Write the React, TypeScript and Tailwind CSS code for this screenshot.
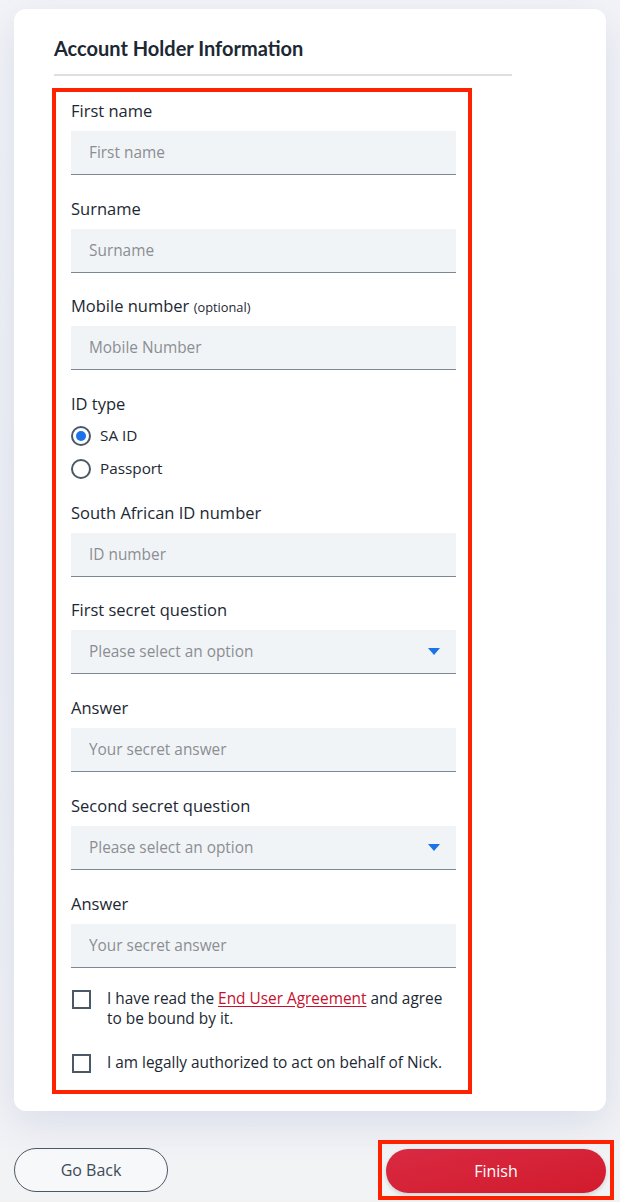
import React, { useState } from 'react'

const body = { fontFamily: '"Open Sans", "Liberation Sans", sans-serif' }

const TextField: React.FC<{ label: React.ReactNode; placeholder: string }> = ({ label, placeholder }) => (
  <div className="flex flex-col">
    <label className="h-6 text-[16.5px] leading-6 text-[#1c2833]">{label}</label>
    <input
      placeholder={placeholder}
      className="mt-2 h-11 w-full border-b border-[#7d8895] bg-[#f1f4f7] px-[18px] text-[15.4px] text-[#1c2833] outline-none placeholder:text-[#8b8e92]"
    />
  </div>
)

const SelectField: React.FC<{ label: string }> = ({ label }) => (
  <div className="flex flex-col">
    <label className="h-6 text-[16.5px] leading-6 text-[#1c2833]">{label}</label>
    <div className="mt-2 flex h-11 w-full items-center justify-between border-b border-[#7d8895] bg-[#f1f4f7] pl-[18px] pr-4">
      <span className="text-[15.4px] text-[#8b8e92]">Please select an option</span>
      <svg width="12" height="7" viewBox="0 0 12 7">
        <path d="M0 0h12L6 7z" fill="#1a73e8" />
      </svg>
    </div>
  </div>
)

const Radio: React.FC<{ checked: boolean; label: string; onClick: () => void }> = ({ checked, label, onClick }) => (
  <button type="button" onClick={onClick} className="flex h-6 items-center gap-[9px]">
    <span className="flex h-5 w-5 items-center justify-center rounded-full border-2 border-[#4b5866]">
      {checked && <span className="h-[10px] w-[10px] rounded-full bg-[#1a73e8]" />}
    </span>
    <span className="text-[15.3px] text-[#1c2833]">{label}</span>
  </button>
)

const Checkbox: React.FC<{ children: React.ReactNode }> = ({ children }) => (
  <label className="flex items-start gap-4 pl-[1px]">
    <span className="mt-[1px] h-[19px] w-[19px] shrink-0 border-2 border-[#4b5866]" />
    <span className="text-[15.4px] leading-5 text-[#1c2833]">{children}</span>
  </label>
)

export default function App() {
  const [idType, setIdType] = useState<'sa' | 'passport'>('sa')

  return (
    <div style={body} className="h-[1202px] w-full bg-[#f1f2f5] bg-gradient-to-b from-[#f3f4f7] via-[#eef0f5] to-[#f2f3f5] pt-[9px]">
      <div className="mx-[14px] h-[1102px] rounded-xl bg-white pl-10 pt-[27px] shadow-[0_12px_40px_rgba(70,90,170,0.14)]">
        <h2
          style={{ fontFamily: 'Lato, "Liberation Sans", sans-serif' }}
          className="text-[20px] font-bold leading-6 text-[#1c2833]"
        >
          Account Holder Information
        </h2>
        <div className="mt-[14px] h-[2px] w-[458px] bg-[#dedfe0]" />

        {/* highlighted form block */}
        <div className="ml-[-2px] mt-3 h-[1006px] w-[420px] border-4 border-[#ff2200] pb-[17px] pl-[15px] pr-3 pt-[7px]">
          <div className="flex flex-col gap-[21.5px]">
            <TextField label="First name" placeholder="First name" />
            <TextField label="Surname" placeholder="Surname" />
            <TextField
              label={
                <>
                  Mobile number <span className="text-[12.8px]">(optional)</span>
                </>
              }
              placeholder="Mobile Number"
            />
            <div className="flex flex-col">
              <label className="h-6 text-[16.5px] leading-6 text-[#1c2833]">ID type</label>
              <div className="mt-[8px] flex flex-col items-start gap-[9px]">
                <Radio checked={idType === 'sa'} label="SA ID" onClick={() => setIdType('sa')} />
                <Radio checked={idType === 'passport'} label="Passport" onClick={() => setIdType('passport')} />
              </div>
            </div>
          </div>
          <div className="mt-5 flex flex-col gap-[21.75px]">
            <TextField label="South African ID number" placeholder="ID number" />
            <SelectField label="First secret question" />
            <TextField label="Answer" placeholder="Your secret answer" />
            <SelectField label="Second secret question" />
            <TextField label="Answer" placeholder="Your secret answer" />
          </div>
          <div className="mt-[21px] flex flex-col gap-6">
            <Checkbox>
              I have read the{' '}
              <a className="text-[#c8102e] underline underline-offset-2">End User Agreement</a> and agree to be
              bound by it.
            </Checkbox>
            <Checkbox>I am legally authorized to act on behalf of Nick.</Checkbox>
          </div>
        </div>
      </div>

      <div className="mt-[29px] flex items-center justify-between pl-[14px] pr-[6px]">
        <button className="h-11 w-[154px] rounded-full border border-[#4b5866] bg-[#f7f8fa] text-[16px] text-[#3d4a58]">
          Go Back
        </button>
        <div className="border-4 border-[#ff2200] px-1 pb-[3px] pt-[5px]">
          <button className="h-11 w-[220px] rounded-full bg-gradient-to-br from-[#d92a42] to-[#d21a2c] text-[16px] text-white shadow-[0_2px_4px_rgba(0,0,0,0.15)]">
            Finish
          </button>
        </div>
      </div>
    </div>
  )
}
